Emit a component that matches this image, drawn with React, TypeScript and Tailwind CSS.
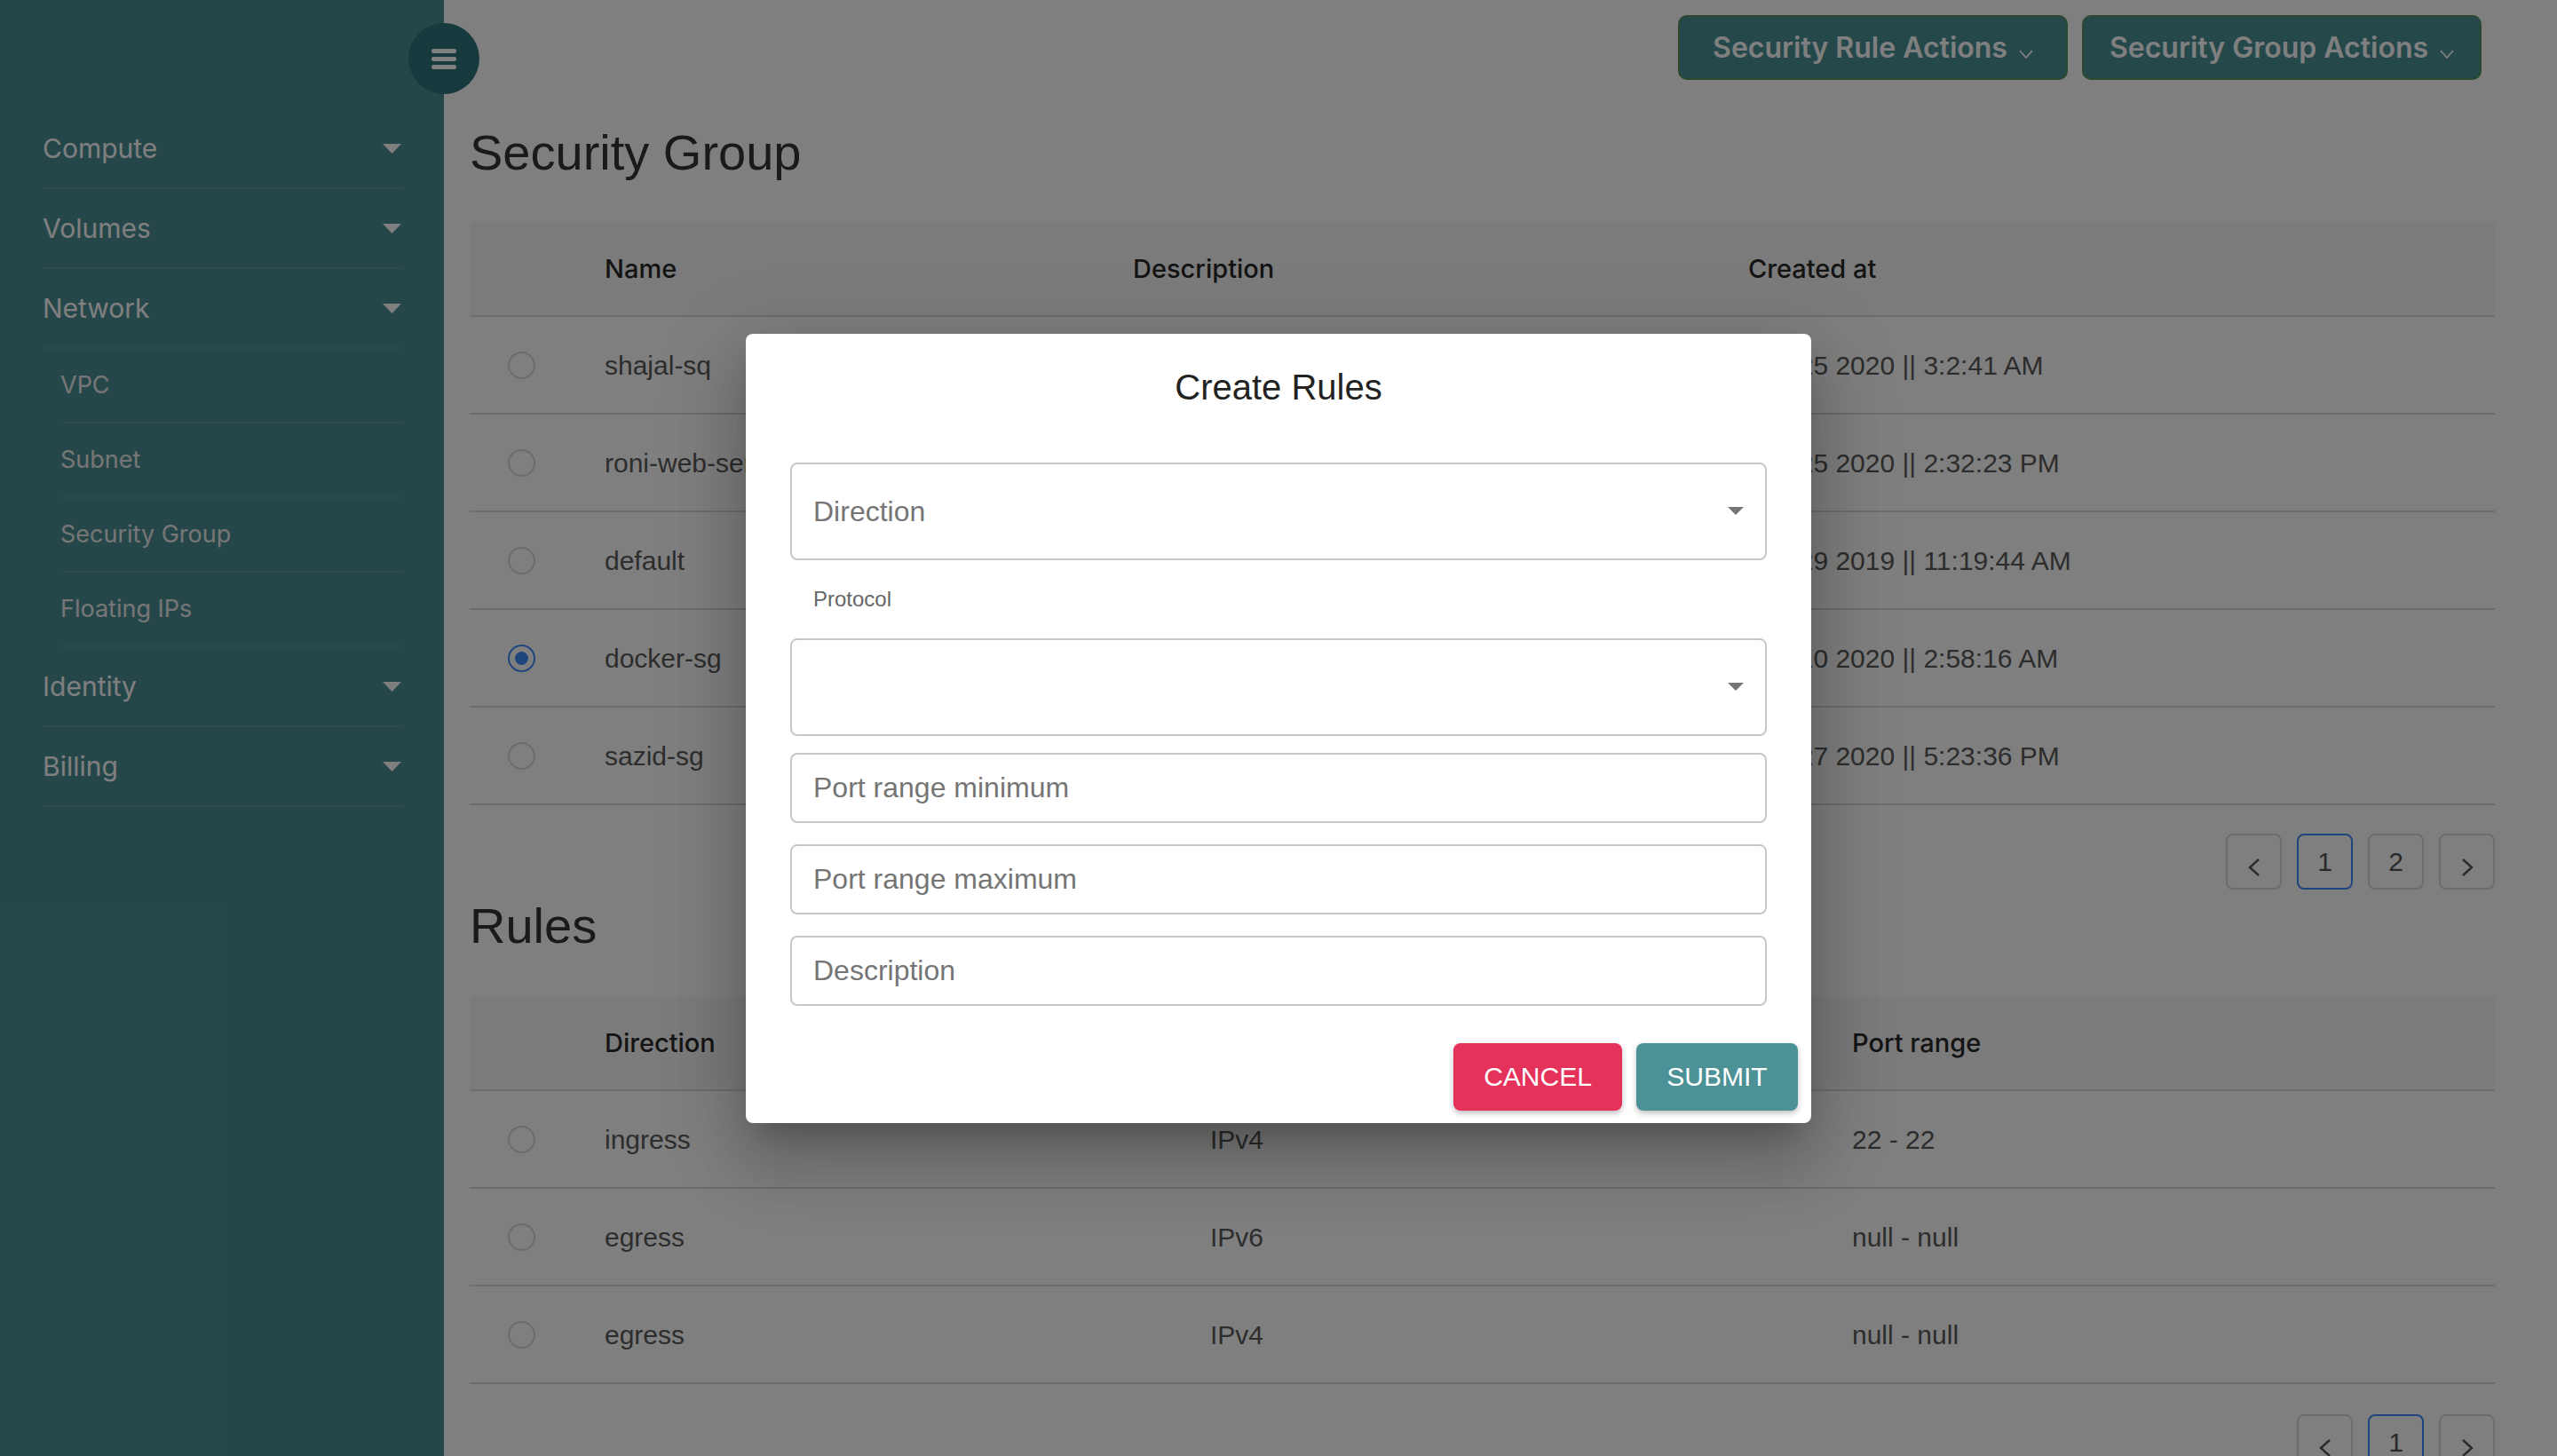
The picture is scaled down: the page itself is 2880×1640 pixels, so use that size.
import React from 'react'

const sans = "font-['Liberation_Sans',Arial,sans-serif]"

function Caret({ className }: { className?: string }) {
  return (
    <svg width="21" height="11" viewBox="0 0 21 11" className={className}>
      <path d="M0 0H21L10.5 11Z" fill="currentColor" />
    </svg>
  )
}

function NavGroup({ label }: { label: string }) {
  return (
    <div className="h-[90px] flex items-center justify-between border-b-2 border-white/[0.07]">
      <span className="text-[30px] text-white">{label}</span>
      <Caret className="text-white mr-[2px]" />
    </div>
  )
}

function NavSub({ label }: { label: string }) {
  return (
    <div className="ml-[20px] h-[84px] flex items-center border-b-2 border-white/[0.07]">
      <span className="text-[27px] text-[#ececec]">{label}</span>
    </div>
  )
}

function Radio({ checked }: { checked?: boolean }) {
  if (checked) {
    return (
      <span className="w-[31px] h-[31px] rounded-full border-2 border-[#3c8dfa] flex items-center justify-center">
        <span className="w-[15px] h-[15px] rounded-full bg-[#3c8dfa]" />
      </span>
    )
  }
  return <span className="block w-[31px] h-[31px] rounded-full border-2 border-[#d8d8d8]" />
}

function Chevron({ dir }: { dir: 'left' | 'right' }) {
  return (
    <svg width="14" height="20" viewBox="0 0 14 20" className="mt-[12px]">
      <path
        d={dir === 'left' ? 'M12 1L2 10L12 19' : 'M2 1L12 10L2 19'}
        fill="none"
        stroke="#555"
        strokeWidth="2.4"
      />
    </svg>
  )
}

function PageBox({ children, active }: { children: React.ReactNode; active?: boolean }) {
  return (
    <div
      className={
        active
          ? 'w-[63px] h-[63px] rounded-[8px] border-2 border-[#3c8dfa] flex items-center justify-center text-[30px] text-[#555]'
          : 'w-[63px] h-[63px] rounded-[8px] border-2 border-[#dadada] flex items-center justify-center text-[30px] text-[#555]'
      }
    >
      {children}
    </div>
  )
}

function Pager({ pages }: { pages: string[] }) {
  return (
    <div className="flex justify-end gap-[17px]">
      <PageBox>
        <Chevron dir="left" />
      </PageBox>
      {pages.map((p, i) => (
        <PageBox key={p} active={i === 0}>
          {p}
        </PageBox>
      ))}
      <PageBox>
        <Chevron dir="right" />
      </PageBox>
    </div>
  )
}

type Row = { cells: string[]; checked?: boolean }

function DataTable({ grid, headers, rows }: { grid: string; headers: string[]; rows: Row[] }) {
  return (
    <div>
      <div className={`grid ${grid} h-[107px] items-center bg-[#f6f6f6] border-b-2 border-[#dadada] rounded-t-[4px]`}>
        <span />
        {headers.map((h) => (
          <span key={h} className="font-['Inter',sans-serif] font-medium text-[29px] text-[#282828]">
            {h}
          </span>
        ))}
      </div>
      {rows.map((r, i) => (
        <div key={i} className={`grid ${grid} h-[110px] items-center border-b-2 border-[#dadada]`}>
          <span className="pl-[43px]">
            <Radio checked={r.checked} />
          </span>
          {r.cells.map((c, j) => (
            <span key={j} className="text-[30px] text-[#5a5a5a] whitespace-nowrap">
              {c}
            </span>
          ))}
        </div>
      ))}
    </div>
  )
}

function ActionButton({ label, width }: { label: string; width: string }) {
  return (
    <button
      className={`${width} h-[73px] rounded-[10px] bg-[#4b9196] border-2 border-[#55925c] flex items-center justify-center gap-[13px] font-['Inter',sans-serif] font-semibold text-[32px] text-white`}
    >
      <span>{label}</span>
      <svg width="16" height="10" viewBox="0 0 16 10" className="mt-[14px]">
        <path d="M1 1L8 9L15 1" fill="none" stroke="white" strokeWidth="1.8" />
      </svg>
    </button>
  )
}

function SelectBox({ label }: { label?: string }) {
  return (
    <div className="h-[110px] border-2 border-[#c8c8c8] rounded-[8px] flex items-center justify-between pl-[24px] pr-[24px]">
      <span className="text-[32px] text-[#757575]">{label}</span>
      <svg width="18" height="9" viewBox="0 0 18 9">
        <path d="M0 0H18L9 9Z" fill="#757575" />
      </svg>
    </div>
  )
}

function TextBox({ label, className }: { label: string; className?: string }) {
  return (
    <input
      readOnly
      placeholder={label}
      className={`block w-full h-[79px] border-2 border-[#c8c8c8] rounded-[8px] pl-[24px] text-[32px] placeholder:text-[#757575] outline-none ${className ?? ''}`}
    />
  )
}

const groups: Row[] = [
  { cells: ['shajal-sq', '', 'Jan 25 2020 || 3:2:41 AM'] },
  { cells: ['roni-web-server', '', 'Jan 25 2020 || 2:32:23 PM'] },
  { cells: ['default', 'Default security group', 'Jun 29 2019 || 11:19:44 AM'] },
  { cells: ['docker-sg', '', 'Jan 10 2020 || 2:58:16 AM'], checked: true },
  { cells: ['sazid-sg', '', 'Jan 27 2020 || 5:23:36 PM'] },
]

const rules: Row[] = [
  { cells: ['ingress', 'IPv4', '22 - 22'] },
  { cells: ['egress', 'IPv6', 'null - null'] },
  { cells: ['egress', 'IPv4', 'null - null'] },
]

export default function App() {
  return (
    <div className={`relative w-[2880px] h-[1640px] overflow-hidden flex bg-white ${sans}`}>
      {/* Sidebar */}
      <aside className="w-[500px] shrink-0 h-full bg-[#4c8f95] pt-[123px] pl-[48px] pr-[46px] font-['Inter',sans-serif]">
        <NavGroup label="Compute" />
        <NavGroup label="Volumes" />
        <NavGroup label="Network" />
        <NavSub label="VPC" />
        <NavSub label="Subnet" />
        <NavSub label="Security Group" />
        <NavSub label="Floating IPs" />
        <NavGroup label="Identity" />
        <NavGroup label="Billing" />
      </aside>

      <button className="absolute left-[460px] top-[26px] w-[80px] h-[80px] rounded-full bg-[#2e747c] flex flex-col items-center justify-center gap-[4px]">
        <span className="w-[28px] h-[5px] rounded-[2px] bg-white" />
        <span className="w-[28px] h-[5px] rounded-[2px] bg-white" />
        <span className="w-[28px] h-[5px] rounded-[2px] bg-white" />
      </button>

      {/* Main */}
      <main className="flex-1 flex flex-col pl-[29px] pr-[70px]">
        <div className="flex justify-end gap-[16px] pt-[17px] pr-[15px]">
          <ActionButton label="Security Rule Actions" width="w-[439px]" />
          <ActionButton label="Security Group Actions" width="w-[450px]" />
        </div>

        <h1 className="mt-[50px] text-[56px] leading-[64px] text-[#343434]">Security Group</h1>
        <div className="mt-[46px]">
          <DataTable
            grid="grid-cols-[152px_595px_693px_1fr]"
            headers={['Name', 'Description', 'Created at']}
            rows={groups}
          />
        </div>
        <div className="mt-[32px]">
          <Pager pages={['1', '2']} />
        </div>

        <h2 className="mt-[9px] text-[56px] leading-[64px] text-[#343434]">Rules</h2>
        <div className="mt-[47px]">
          <DataTable
            grid="grid-cols-[152px_682px_723px_1fr]"
            headers={['Direction', 'Ether Type', 'Port range']}
            rows={rules}
          />
        </div>
        <div className="mt-[34px]">
          <Pager pages={['1']} />
        </div>
      </main>

      {/* Modal */}
      <div className="absolute inset-0 bg-black/50 flex items-center justify-center">
        <div className="w-[1200px] bg-white rounded-[8px] pt-[36px] px-[50px] pb-[14px] shadow-[0_22px_30px_-14px_rgba(0,0,0,0.2),0_48px_76px_6px_rgba(0,0,0,0.14),0_18px_92px_16px_rgba(0,0,0,0.12)]">
          <h3 className="text-center text-[40px] leading-[48px] text-[#222]">Create Rules</h3>
          <div className="mt-[61px]">
            <SelectBox label="Direction" />
          </div>
          <div className="mt-[32px] pl-[26px] text-[24px] leading-[24px] text-[#666]">Protocol</div>
          <div className="mt-[32px]">
            <SelectBox />
          </div>
          <TextBox label="Port range minimum" className="mt-[19px]" />
          <TextBox label="Port range maximum" className="mt-[24px]" />
          <TextBox label="Description" className="mt-[24px]" />
          <div className="mt-[42px] -mr-[35px] flex justify-end gap-[16px]">
            <button className="w-[190px] h-[76px] rounded-[8px] bg-[#e5325a] text-white text-[30px] shadow-[0_3px_6px_rgba(0,0,0,0.25)]">
              CANCEL
            </button>
            <button className="w-[182px] h-[76px] rounded-[8px] bg-[#4b9196] text-white text-[30px] shadow-[0_3px_6px_rgba(0,0,0,0.25)]">
              SUBMIT
            </button>
          </div>
        </div>
      </div>
    </div>
  )
}
